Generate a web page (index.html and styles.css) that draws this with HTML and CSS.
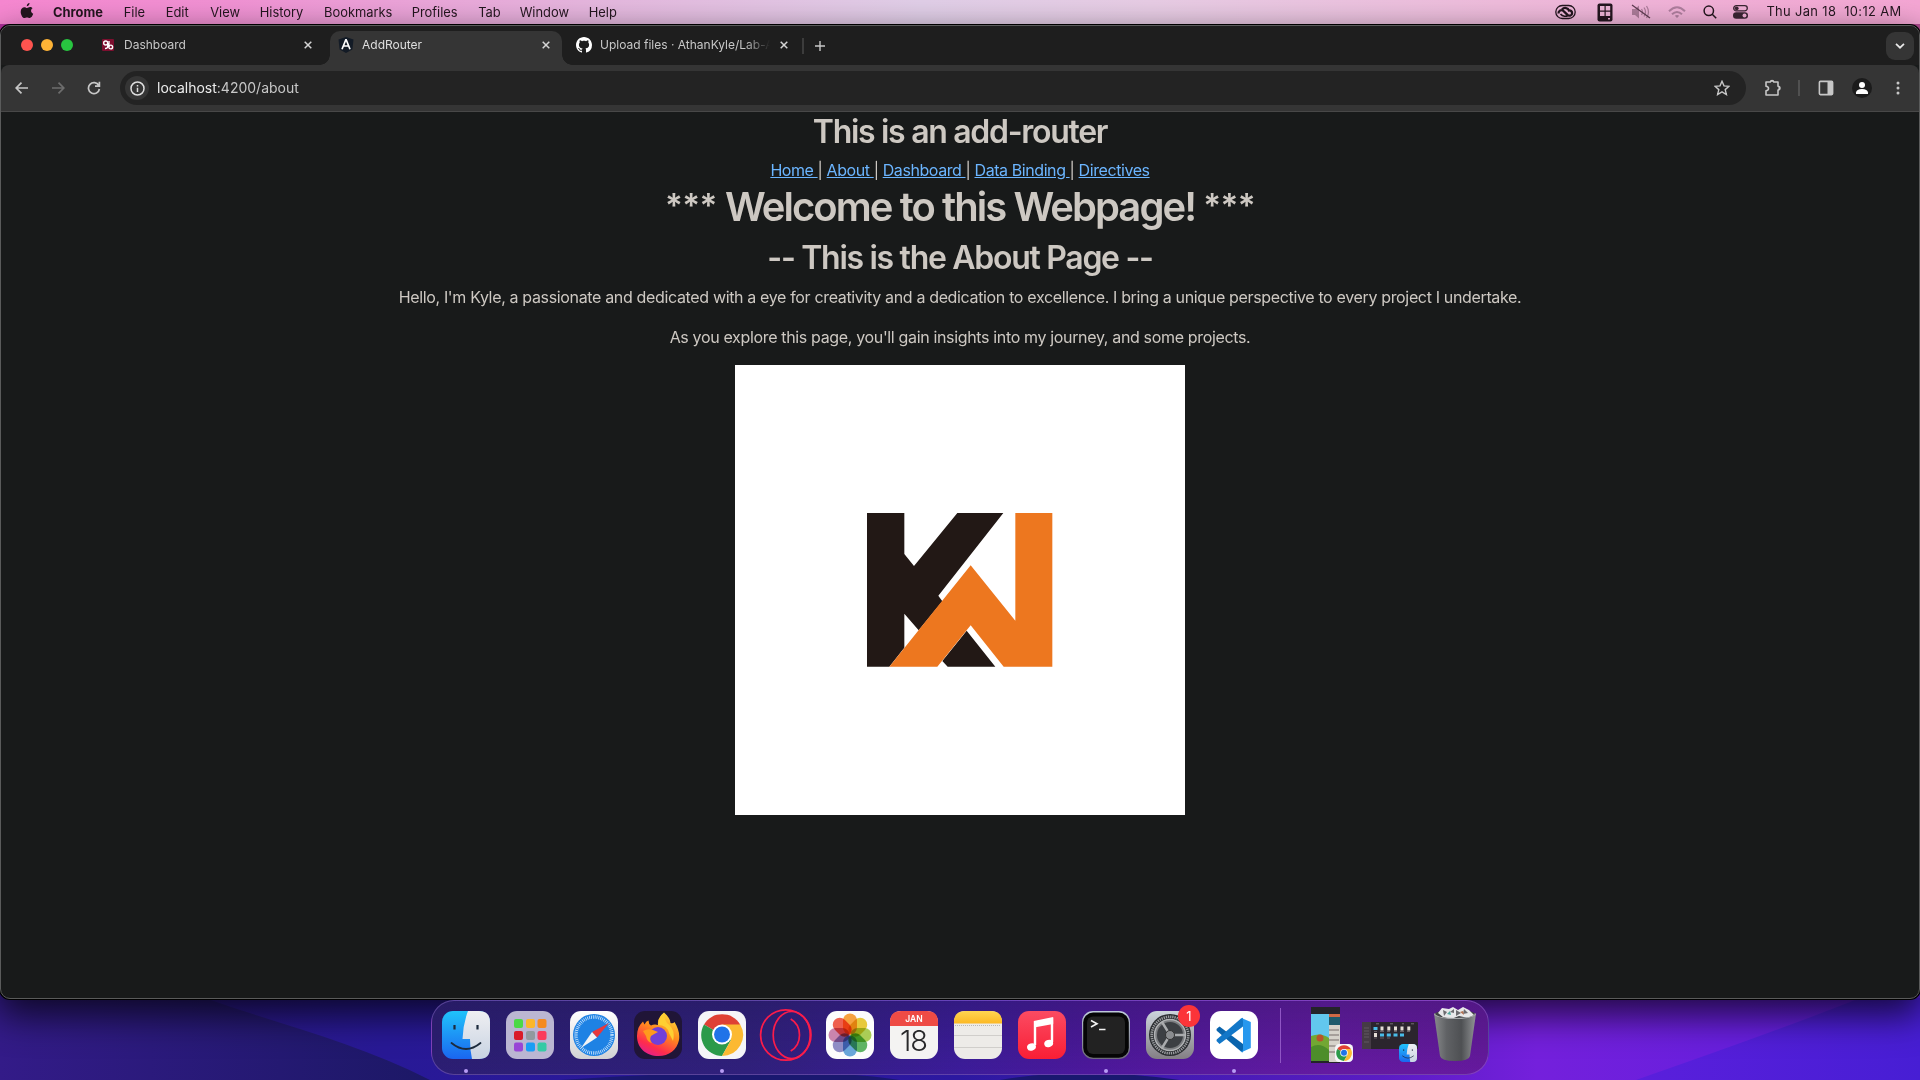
FILE: index.html
```html
<!DOCTYPE html>
<html lang="en">
<head>
<meta charset="utf-8">
<title>AddRouter</title>
<link rel="stylesheet" href="styles.css">
</head>
<body>
<svg class="wallpaper" viewBox="0 0 1920 1080" aria-hidden="true">
  <defs>
    <linearGradient id="wp" x1="0" x2="1"><stop offset="0" stop-color="#321a84"/><stop offset=".2" stop-color="#281996"/><stop offset=".5" stop-color="#2c18a0"/><stop offset=".72" stop-color="#5a1cc4"/><stop offset=".8" stop-color="#7420dc"/><stop offset="1" stop-color="#5c1ede"/></linearGradient>
    <linearGradient id="wl" x1="0" x2="1"><stop offset="0" stop-color="#331b88"/><stop offset="1" stop-color="#1c1866"/></linearGradient>
    <linearGradient id="wr" x1="0" x2="1"><stop offset="0" stop-color="#5a1fdc"/><stop offset="1" stop-color="#471ed4"/></linearGradient>
  </defs>
  <rect width="1920" height="1080" fill="url(#wp)"/>
  <rect width="30" height="60" fill="#b0309c"/><rect x="1890" width="30" height="60" fill="#b04a90"/>
  <path d="M0 980H160C240 1016 340 1034 430 1080H0Z" fill="url(#wl)"/>
  <path d="M1636 1080Q1780 1030 1860 998H1920V1080Z" fill="url(#wr)"/>
  <path d="M560 1080Q800 1064 900 1080ZM1000 1080Q1080 1066 1180 1080Z" fill="#1a1870"/>
</svg>
<header class="menubar">
  <svg class="apple" viewBox="0 0 14 17"><path d="M9.7 0C9.8 1.7 8.3 3.4 6.8 3.4 6.6 1.8 8.1.2 9.7 0ZM12.9 5.7C10.6 7.200 10.900 10.400 13.600 11.500 12.900 13.700 11.500 16 9.900 16 8.700 16 8.300 15.300 7 15.300S5.200 16 4.200 16C2.300 16 .3 12.600.3 9.300.3 6.100 2.200 4.400 4.300 4.400 5.500 4.400 6.400 5.200 7.100 5.200S8.800 4.300 10.200 4.300C11.300 4.300 12.300 4.800 12.900 5.700Z"/></svg>
  <nav class="menus"><b>Chrome</b><span>File</span><span>Edit</span><span>View</span><span>History</span><span>Bookmarks</span><span>Profiles</span><span>Tab</span><span>Window</span><span>Help</span></nav>
  <div class="status">
    <svg width="21" height="16" viewBox="0 0 21 16"><rect x=".8" y="1.500" width="19.400" height="13" rx="6.500" fill="none" stroke="#24161f" stroke-width="1.300"/><path d="M3.500 9.500a3 3 0 0 1 5-2.500l4 3.800c2 1.700 4.600.6 4.600-1.600 0-2-1.600-3-3.200-2.700-.8-2.600-4.600-3.700-6.900-1" fill="none" stroke="#24161f" stroke-width="2.300"/><path d="M5.500 10c2.200 3 5.800 2.500 7.500 1.500L9 7.500" fill="none" stroke="#24161f" stroke-width="1.600"/></svg>
    <svg width="16" height="19" viewBox="0 0 16 19"><rect x=".5" y=".5" width="15" height="18" rx="2" fill="#24161f"/><path d="M3 3h4.500v4.500H3zM8.700 3h4.500v4.500H8.700zM3 8.700h4.500v4.200H3zM8.700 8.700h4.500v4.200H8.700zM11 15h2v1.500h-2z" fill="#efb6d8"/></svg>
    <svg width="20" height="16" viewBox="0 0 20 16"><g opacity=".45"><path d="M1 5h3l4-3.500v13L4 11H1z" fill="#5d3a50"/><path d="M10.500 5q2 3 0 6M13 3.500q3 4.500 0 9M15.500 2q4 6 0 12" stroke="#5d3a50" fill="none" stroke-width="1.300"/></g><path d="M1 1l18 13" stroke="#5d3a50" stroke-width="1.200"/></svg>
    <svg width="18" height="13" viewBox="0 0 18 13" fill="none" stroke="#b07f9f" stroke-width="2"><path d="M1 5.200Q9-2.600 17 5.200M4 8.300Q9 3.600 14 8.300"/><path d="M9 12L6.800 9.800Q9 8 11.200 9.800Z" fill="#b07f9f" stroke="none"/></svg>
    <svg width="14" height="14" viewBox="0 0 14 14" fill="none" stroke="#24161f" stroke-width="1.500"><circle cx="5.800" cy="5.800" r="4.700"/><path d="M9.200 9.200l4 4"/></svg>
    <svg width="15" height="14" viewBox="0 0 15 14"><rect x=".7" y=".7" width="13.600" height="5.200" rx="2.600" fill="none" stroke="#3a2533" stroke-width="1.300"/><circle cx="3.700" cy="3.300" r="1.900" fill="#3a2533"/><rect y="7.300" width="15" height="6.500" rx="3.200" fill="#3a2533"/><circle cx="11.500" cy="10.500" r="2" fill="#f1b0d6"/></svg>
    <time><span>Thu Jan 18</span><span>10:12 AM</span></time>
  </div>
</header>

<main class="window">
  <div class="tabstrip">
    <div class="lights"><i class="red"></i><i class="amber"></i><i class="green"></i></div>
    <div class="tab tab-first">
      <svg width="12" height="12" viewBox="0 0 12 12"><rect width="12" height="12" rx="1" fill="#7d0f2f"/><circle cx="3.700" cy="4" r="2" fill="none" stroke="#fff" stroke-width="1.400"/><path d="M5.700 4v3.600Q5.500 9.600 3 9.500M7 2v6" fill="none" stroke="#fff" stroke-width="1.300"/><circle cx="8.700" cy="8" r="1.900" fill="none" stroke="#fff" stroke-width="1.400"/></svg>
      <span class="title">Dashboard</span><svg class="close" viewBox="0 0 8 8"><path d="M.7.7l6.600 6.600M7.300.7L.7 7.300"/></svg>
    </div>
    <div class="tab tab-active">
      <svg width="16" height="16" viewBox="0 0 16 16"><path d="M8 0l7.500 2.600-1.100 10L8 16l-6.400-3.400-1.100-10z" fill="#131b26"/><path d="M8 2.300L4 12.200M8 2.300l4 9.900M5.500 9h5" fill="none" stroke="#fff" stroke-width="1.700"/></svg>
      <span class="title">AddRouter</span><svg class="close" viewBox="0 0 8 8"><path d="M.7.7l6.600 6.600M7.300.7L.7 7.300"/></svg>
    </div>
    <div class="tab tab-last">
      <svg width="16" height="16" viewBox="0 0 16 16"><path fill="#fff" d="M8 0C3.580 0 0 3.580 0 8c0 3.540 2.290 6.530 5.470 7.590.4.070.55-.17.55-.38 0-.19-.01-.82-.01-1.490-2.010.37-2.530-.49-2.690-.94-.09-.23-.48-.94-.82-1.130-.28-.15-.68-.52-.01-.53.63-.01 1.080.58 1.230.82.720 1.210 1.870.87 2.330.66.070-.52.280-.87.510-1.070-1.780-.2-3.640-.89-3.640-3.950 0-.87.310-1.590.82-2.150-.08-.2-.36-1.020.08-2.120 0 0 .67-.21 2.200.82.640-.18 1.320-.27 2-.27s1.360.09 2 .27c1.530-1.040 2.200-.82 2.200-.82.440 1.100.16 1.920.08 2.120.51.560.82 1.270.82 2.150 0 3.070-1.870 3.750-3.650 3.950.29.25.54.73.54 1.480 0 1.070-.01 1.930-.01 2.200 0 .21.150.46.550.38A8.010 8.010 0 0 0 16 8c0-4.420-3.580-8-8-8z"/></svg>
      <span class="title">Upload files · AthanKyle/Lab-A</span><svg class="close" viewBox="0 0 8 8"><path d="M.7.7l6.600 6.600M7.300.7L.7 7.300"/></svg>
    </div>
    <i class="tab-sep"></i>
    <svg class="plus" width="10" height="10" viewBox="0 0 10 10"><path d="M5 0v10M0 5h10" stroke="#c7c7c7" stroke-width="1.400"/></svg>
    <div class="tab-search"><svg width="10" height="6" viewBox="0 0 10 6"><path d="M1 .8l4 3.900L9 .8" fill="none" stroke="#e8e8e8" stroke-width="1.700"/></svg></div>
  </div>
  <div class="toolbar">
    <div class="navbtns">
      <svg width="14" height="12" viewBox="0 0 14 12"><path d="M6.500.6L1.200 6l5.300 5.400M1.200 6H13" stroke="#c7c7c7"/></svg>
      <svg width="14" height="12" viewBox="0 0 14 12"><path d="M7.500.6L12.800 6l-5.300 5.400M12.800 6H1" stroke="#6d6d6d"/></svg>
      <svg width="14" height="14" viewBox="0 0 14 14"><path d="M11.800 4.500A5.500 5.500 0 1 0 12.400 8M12.400.8v4.400H8" stroke="#c7c7c7"/></svg>
    </div>
    <div class="omnibox">
      <div class="info"><svg width="15" height="15" viewBox="0 0 15 15"><circle cx="7.500" cy="7.500" r="6.500" fill="none" stroke="#dedede" stroke-width="1.500"/><path d="M7.500 6.700v4.200M7.500 3.900v1.500" stroke="#dedede" stroke-width="1.500"/></svg></div>
      <span class="url"><b>localhost</b>:4200/about</span>
      <svg class="star" width="16" height="16" viewBox="0 0 16 16"><path d="M8 1.300l2 4.600 5 .4-3.800 3.300 1.200 4.900L8 11.900l-4.400 2.600 1.200-4.900L1 6.300l5-.4z" fill="none" stroke="#c7c7c7" stroke-width="1.400"/></svg>
    </div>
    <div class="actions">
      <svg width="18" height="18" viewBox="0 0 18 18"><path d="M2 3h4.300a1.800 1.800 0 0 1 3.500 0H14v4.200a1.900 1.900 0 0 1 0 3.800v5H2v-4.300q2.500-.3 2.500-2.200T2 7.300Z" fill="none" stroke="#c7c7c7" stroke-width="1.600" stroke-linejoin="round"/><path d="M6.500 2.500a1.700 1.700 0 0 1 3.200 0ZM14.500 7.500a1.700 1.700 0 0 1 0 3.200Z" fill="#c7c7c7"/></svg>
      <i></i>
      <svg width="16" height="16" viewBox="0 0 16 16"><rect x="1.400" y="1.400" width="13.200" height="13.200" rx="1" fill="none" stroke="#c7c7c7" stroke-width="1.600"/><path d="M9.500 1.500h5v13h-5z" fill="#c7c7c7"/></svg>
      <svg width="20" height="20" viewBox="0 0 20 20"><circle cx="10" cy="10" r="10" fill="#1b1b1b"/><circle cx="10" cy="7" r="3" fill="#fff"/><path d="M4 16v-1.500Q4.500 11 10 11t6 3.500V16Z" fill="#fff"/></svg>
      <svg width="4" height="14" viewBox="0 0 4 14" fill="#c7c7c7"><circle cx="2" cy="2" r="1.500"/><circle cx="2" cy="7" r="1.500"/><circle cx="2" cy="12" r="1.500"/></svg>
    </div>
  </div>
  <section class="page">
    <h2 class="h-router">This is an add-router</h2>
    <nav class="links"><a>Home </a>| <a>About </a>| <a>Dashboard </a>| <a>Data Binding </a>| <a>Directives</a></nav>
    <h1><span class="stars">***</span> Welcome to this Webpage! <span class="stars">***</span></h1>
    <h2>-- This is the About Page --</h2>
    <p>Hello, I'm Kyle, a passionate and dedicated with a eye for creativity and a dedication to excellence. I bring a unique perspective to every project I undertake.</p>
    <p>As you explore this page, you'll gain insights into my journey, and some projects.</p>
    <svg class="logo" viewBox="0 0 450 450"><rect width="450" height="450" fill="#fff"/><g transform="translate(105 125) scale(.33333)"><path fill="#221815" d="M81 69H193V192L222 228 352 69H490L295 317 307 334 236 421 193 371V473L148 530H81ZM380 422L466 530H323L307 513Z"/><path fill="#ed771f" d="M148 530L392 226 526 392V69H637V530H491L392 406 292 530Z"/></g></svg>
  </section>
</main>

<footer class="dock">
  <svg class="app" viewBox="0 0 48 48"><defs><linearGradient id="fb" x2="0" y2="1"><stop stop-color="#20c3fb"/><stop offset="1" stop-color="#1a66f0"/></linearGradient><linearGradient id="fw" x2="0" y2="1"><stop stop-color="#efeff2"/><stop offset="1" stop-color="#c8d3e2"/></linearGradient>
    <symbol id="finder" viewBox="0 0 48 48"><rect width="48" height="48" rx="11" fill="url(#fb)"/><path d="M26 0H37Q48 0 48 11V37Q48 48 37 48H30Q28 39 28 28H20.500Q21 13 26 0Z" fill="url(#fw)"/><path d="M12.500 14v4.500M35.500 14v4.500" stroke="#1c2a3c" stroke-width="2.200"/><path d="M9.500 32Q24 44 38.500 32" fill="none" stroke="#1c2a3c" stroke-width="1.800" stroke-linecap="round"/></symbol></defs><use href="#finder" width="48" height="48"/><circle class="dot" cx="24" cy="60" r="2"/></svg>
  <svg class="app" viewBox="0 0 48 48"><rect width="48" height="48" rx="11" fill="#bbb6d2"/><rect x="8" y="8" width="9" height="9" rx="2" fill="#4bd948"/><rect x="20" y="8" width="9" height="9" rx="2" fill="#fbb62a"/><rect x="31.500" y="8" width="9" height="9" rx="2" fill="#f58a20"/><rect x="8" y="20" width="9" height="9" rx="2" fill="#d91b28"/><rect x="20" y="20" width="9" height="9" rx="2" fill="#929a9f"/><rect x="31.500" y="20" width="9" height="9" rx="2" fill="#fb3c5c"/><rect x="8" y="31.500" width="9" height="9" rx="2" fill="#9845d6"/><rect x="20" y="31.500" width="9" height="9" rx="2" fill="#1a9df5"/><rect x="31.500" y="31.500" width="9" height="9" rx="2" fill="#35caa5"/></svg>
  <svg class="app" viewBox="0 0 48 48"><defs><linearGradient id="sw" x2="0" y2="1"><stop stop-color="#fff"/><stop offset="1" stop-color="#d2d2d4"/></linearGradient></defs><rect width="48" height="48" rx="11" fill="url(#sw)"/><circle cx="24" cy="24" r="21" fill="#1e82e4"/><circle cx="24" cy="24" r="18" fill="none" stroke="#cfe7fc" stroke-width="3.400" stroke-dasharray=".8 1.090"/><path d="M39 12L22 21l5 5.500z" fill="#e8383c"/><path d="M11 37L22 21l5 5.500z" fill="#f2f2f4"/></svg>
  <svg class="app" viewBox="0 0 48 48"><defs><linearGradient id="ff" x1=".8" y1="0" x2=".3" y2="1"><stop stop-color="#ffe03c"/><stop offset=".45" stop-color="#ff8a1e"/><stop offset=".8" stop-color="#ff2c4c"/><stop offset="1" stop-color="#e3208c"/></linearGradient></defs><rect width="48" height="48" rx="11" fill="#201537"/><path d="M30 1.500C34 5 36 8 36.500 12Q39 13 40.500 11C44 17 46 22 45 29 43 39 35 45 24.500 45 12 45 3 37 3 25 3 19 5 14 9 10.500L10.500 13.500Q12 10 14.500 9.500 14.500 13 17 14.500 20 13 24 14 23 7 30 1.500Z" fill="url(#ff)"/><circle cx="24" cy="25" r="9" fill="#7140d8"/><path d="M9 20Q14 17 19 19L24 21Q20 23 17 25 15 29 18 32 13 31 12 25Z" fill="#ff9a1c"/><path d="M24 14Q33 14 35 22L39 30Q42 18 33 12 30 7 30 2 24 6 24 14Z" fill="#ffcf32"/></svg>
  <svg class="app" viewBox="0 0 48 48"><defs><symbol id="chrome" viewBox="0 0 48 48"><rect width="48" height="48" rx="11" fill="#f5f5f8"/><path d="M24 24L6 13.500A21 21 0 0 1 42.200 13.500Z" fill="#df4034"/><path d="M24 24L33 29 24 45A21 21 0 0 1 6 13.500Z" fill="#2b9a4a"/><path d="M24 13.500H42.200A21 21 0 0 1 24 45L33 29Z" fill="#fcb932"/><circle cx="24" cy="23.500" r="10" fill="#fff"/><circle cx="24" cy="23.500" r="8" fill="#2073e8"/></symbol></defs><use href="#chrome" width="48" height="48"/><circle class="dot" cx="24" cy="60" r="2"/></svg>
  <svg class="app" viewBox="0 0 48 48"><g fill="none" stroke="#fb1c4a" stroke-width="1.700"><circle cx="23.800" cy="24" r="25.200"/><ellipse cx="29.700" cy="24" rx="18.500" ry="23.500"/><path d="M28.700 8Q37.500 13 37.500 24T28.700 40"/></g></svg>
  <svg class="app" viewBox="0 0 48 48"><rect width="48" height="48" rx="11" fill="#fcfcfc"/><g transform="translate(24 24)"><g class="petals"><rect x="-7" y="-21.500" width="14" height="21" rx="7" fill="#f99a2a"/><rect x="-7" y="-21.500" width="14" height="21" rx="7" fill="#e8c727" transform="rotate(45)"/><rect x="-7" y="-21.500" width="14" height="21" rx="7" fill="#a3cb45" transform="rotate(90)"/><rect x="-7" y="-21.500" width="14" height="21" rx="7" fill="#4fae55" transform="rotate(135)"/><rect x="-7" y="-21.500" width="14" height="21" rx="7" fill="#5a9fd8" transform="rotate(180)"/><rect x="-7" y="-21.500" width="14" height="21" rx="7" fill="#8583c2" transform="rotate(225)"/><rect x="-7" y="-21.500" width="14" height="21" rx="7" fill="#c87aa6" transform="rotate(270)"/><rect x="-7" y="-21.500" width="14" height="21" rx="7" fill="#f0503c" transform="rotate(315)"/></g></g></svg>
  <svg class="app" viewBox="0 0 48 48"><rect width="48" height="48" rx="11" fill="#f4f3f2"/><path d="M0 15V11Q0 0 11 0H37Q48 0 48 11V15Z" fill="#ee4b45"/><text x="24" y="11" class="cal-m">JAN</text><text x="23.500" y="40" class="cal-d">18</text></svg>
  <svg class="app" viewBox="0 0 48 48"><defs><linearGradient id="ny" x2="0" y2="1"><stop stop-color="#ffd552"/><stop offset="1" stop-color="#fcb823"/></linearGradient></defs><rect width="48" height="48" rx="11" fill="#edebe8"/><path d="M0 12.500V11Q0 0 11 0H37Q48 0 48 11V12.500Z" fill="url(#ny)"/><path d="M0 24.500H48M0 36.500H48" stroke="#d0cecb"/><path d="M1 14.500H47" stroke="#b9b7b4" stroke-dasharray="1 1"/></svg>
  <svg class="app" viewBox="0 0 48 48"><defs><linearGradient id="mu" x2="0" y2="1"><stop stop-color="#fb4b62"/><stop offset="1" stop-color="#f91e35"/></linearGradient></defs><rect width="48" height="48" rx="11" fill="url(#mu)"/><path d="M17 34V11L34 7.500V31" fill="none" stroke="#fff" stroke-width="2.400"/><path d="M16 10.500L35.200 7v6L16 16.500Z" fill="#fff"/><ellipse cx="13.500" cy="36" rx="4.500" ry="3.600" fill="#fff" transform="rotate(-18 13.500 36)"/><ellipse cx="30.700" cy="32.500" rx="4.500" ry="3.600" fill="#fff" transform="rotate(-18 30.700 32.500)"/></svg>
  <svg class="app" viewBox="0 0 48 48"><defs><linearGradient id="te" x2="0" y2="1"><stop stop-color="#bfcbdb"/><stop offset="1" stop-color="#6d6b78"/></linearGradient></defs><rect width="48" height="48" rx="11" fill="url(#te)"/><rect x="1.200" y="1.500" width="45.600" height="45.300" rx="10" fill="#050505"/><rect x="5" y="5.500" width="38" height="37.500" rx="6" fill="#222"/><path d="M9 9.500l6 3.200-6 3.300M17 18.500h6.500" fill="none" stroke="#f2f2f2" stroke-width="1.600"/><circle class="dot" cx="24" cy="60" r="2"/></svg>
  <div class="settings"><svg class="app" viewBox="0 0 48 48"><defs><linearGradient id="se" x2="0" y2="1"><stop stop-color="#cdd5dc"/><stop offset="1" stop-color="#837f84"/></linearGradient></defs><rect width="48" height="48" rx="11" fill="url(#se)"/><circle cx="24" cy="24" r="21" fill="#2b2e31"/><circle cx="24" cy="24" r="18.300" fill="none" stroke="#9b9da0" stroke-width="2.600" stroke-dasharray="1.300 .9"/><circle cx="24" cy="24" r="15.500" fill="#7b7d80"/><circle cx="24" cy="24" r="13" fill="#3c3f43"/><path d="M24 24H39M24 24L16 11M24 24L16 37" stroke="#a9abad" stroke-width="2.400"/><circle cx="24" cy="24" r="4.500" fill="#8a8c8f" stroke="#333"/><circle cx="24" cy="24" r="15.500" fill="none" stroke="#b1b3b5" stroke-width="1.500"/></svg><span class="badge">1</span></div>
  <svg class="app" viewBox="0 0 48 48"><rect width="48" height="48" rx="11" fill="#fff"/><path d="M6.500 18L9.500 15.500 33 33V41.500L31 40.500 6.700 19.800Z" fill="#0a64ad"/><path d="M6.500 30L9.500 33 33 15.500V6.800L31 7.500 6.700 28.400Z" fill="#1277c8"/><path d="M31.500 7L40.800 11V37L31.500 41.200 30.500 40.500Q33 41 33 38V10Q33 7 30.500 7.600Z" fill="#2798ee"/><circle class="dot" cx="24" cy="60" r="2"/></svg>
  <i class="dock-sep"></i>
  <svg class="thumb-a" width="42" height="56" viewBox="0 0 42 56"><rect width="29" height="56" fill="#242329"/><rect y="7" width="18" height="47" fill="#62c7ee"/><path d="M0 29Q10 25 18 31V54H0Z" fill="#72a733"/><path d="M0 40Q9 35 18 43V54H0Z" fill="#4d8d2a"/><circle cx="9" cy="31" r="3.500" fill="#b8532a"/><rect x="18" y="7" width="11" height="3" fill="#cf6945"/><rect x="18" y="10" width="11" height="8" fill="#1e5a6c"/><rect x="18" y="18" width="11" height="37" fill="#d6d2ca"/><path d="M18 23h10M18 28h10M18 33h10M18 39h10M18 45h10" stroke="#776d6a"/><use href="#chrome" x="24" y="37" width="18" height="18"/></svg>
  <svg class="thumb-b" width="56" height="41" viewBox="0 0 56 41"><rect width="56" height="27" rx="1" fill="#2b252d"/><rect width="9" height="27" fill="#453b45"/><path d="M2 6h5M2 9h5M2 12h5M2 15h5M2 20h5" stroke="#6a606a" stroke-width=".8"/><path d="M14 1.800h3M28 1.800h3M40 1.800h2M49 1.800h3" stroke="#756d76"/><path d="M11.500 5h4v3h-4zM18 11.500h4v3h-4zM24.800 11.500h4v3h-4zM31.500 11.500h4v3h-4zM38 11.500h4v3h-4z" fill="#48bce9"/><path d="M18.500 4.500h3v4h-3zM25.300 4.500h3v4h-3zM32 4.500h3v4h-3zM38.500 4.500h3v4h-3zM45.300 4.500h3v4h-3zM12 11h3v4h-3z" fill="#e4ddd5"/><path d="M12 9.500h3M18 9.500h4M25 9.500h3M32 9.500h3M38 9.500h4M45 9.500h3M12 16h3M18 16h4M25 16h3" stroke="#827a80" stroke-width=".7"/><use href="#finder" x="37" y="22" width="18" height="18"/></svg>
  <svg class="trash" width="44" height="56" viewBox="0 0 44 56"><defs><linearGradient id="tr" x2="1" y2="0"><stop stop-color="#888a8c"/><stop offset=".3" stop-color="#606265"/><stop offset=".65" stop-color="#4e5053"/><stop offset="1" stop-color="#929496"/></linearGradient></defs><path d="M1 7.500Q22 2 43 7.500L37 50Q36 55 22 55T7 50Z" fill="url(#tr)"/><ellipse cx="22" cy="8.500" rx="20" ry="4.800" fill="#404246"/><path d="M5 7l4-5 7 1 4-2 5 3 5-3 6 3 5 5-6 3-9-2-8 3-8-2z" fill="#e8e8ea"/><path d="M10 4l4 2-3 4zM23 4l5 3-5 3zM31 3l4 4-5 1zM17 6l4-3v4z" fill="#6d6c70"/><path d="M14 8l3-3 1 4z" fill="#50a89e"/><path d="M27 6l3-1 1 4z" fill="#b47252"/><path d="M1.500 8Q4 12.500 22 12.500T42.500 8" fill="none" stroke="#a4a6a8" stroke-width="1.200"/></svg>
</footer>
</body>
</html>
```
FILE: styles.css
```css
* { box-sizing: border-box; }
html, body { height: 100%; }
body { margin: 0; overflow: hidden; display: flex; flex-direction: column; font-family: Inter, "Noto Sans", sans-serif; background: #281996; }
svg { display: block; flex: none; }
.wallpaper { position: absolute; inset: 0; width: 1920px; height: 1080px; z-index: -1; }

.menubar { height: 24px; flex: none; display: flex; align-items: center; padding: 0 18.5px 0 20px; color: #24161f; font-size: 12.9px; background: linear-gradient(90deg, #f788d1 0, #f192d4 12%, #e5b9df 32%, #e1cfe8 48%, #e8cde5 60%, #efbcdc 78%, #f5a6d4 100%); }
.apple { width: 14px; height: 16px; fill: #24161f; margin: 0 19px 2px 0; }
.menus { display: grid; grid-template-columns: 70.7px 42px 44.5px 49.5px 64.3px 87.7px 66.5px 41.5px 69px 60px; line-height: 23px; white-space: nowrap; }
.menus b { font-weight: 700; }
.status { margin-left: auto; display: flex; align-items: center; }
.status svg:nth-child(1) { margin-right: 21px; }
.status svg:nth-child(2) { margin-right: 18px; }
.status svg:nth-child(3) { margin-right: 17px; }
.status svg:nth-child(4) { margin-right: 17px; }
.status svg:nth-child(5) { margin-right: 16px; }
.status svg:nth-child(6) { margin-right: 18px; }
time { display: flex; gap: 8px; letter-spacing: .36px; padding-bottom: 1px; white-space: nowrap; }

.window { margin-top: 1px; height: 974px; flex: none; border: 1px solid #5a5b5b; border-radius: 10px; overflow: hidden; display: flex; flex-direction: column; background: #181a1a; box-shadow: 0 0 0 1px #000, 0 14px 36px 2px rgba(0, 0, 0, .7); }
.tabstrip { height: 39px; flex: none; display: flex; align-items: center; background: #1e1e1e; color: #c7c7c7; font-size: 12px; }
.lights { display: flex; gap: 8px; padding: 0 0 1px 20px; width: 101px; }
.lights i { width: 12px; height: 12px; border-radius: 50%; }
.red { background: #fe544f; }
.amber { background: #feb336; }
.green { background: #28c540; }
.tab { display: flex; align-items: center; white-space: nowrap; padding-bottom: 2px; }
.tab-first { width: 228px; padding-right: 18.5px; }
.tab-first .title { margin-left: 10px; }
.close { width: 8px; height: 8px; margin-left: auto; stroke: #d5d5d5; stroke-width: 1.5; }
.tab-active { width: 232px; height: 34px; align-self: flex-end; padding: 0 12px 7px 8px; background: #353535; border-radius: 10px 10px 0 0; color: #dedede; position: relative; }
.tab-active::before, .tab-active::after { content: ""; position: absolute; bottom: 0; width: 10px; height: 10px; }
.tab-active::before { left: -10px; background: radial-gradient(circle at 0 0, transparent 9.5px, #353535 10px); }
.tab-active::after { right: -10px; background: radial-gradient(circle at 100% 0, transparent 9.5px, #353535 10px); }
.tab-active .title { margin-left: 8px; }
.tab-last { width: 226px; padding-left: 14px; }
.tab-last .title { margin-left: 8px; width: 176px; -webkit-mask-image: linear-gradient(90deg, #000 145px, transparent 170px); mask-image: linear-gradient(90deg, #000 145px, transparent 170px); }
.tab-sep { width: 2px; height: 16px; margin: 0 11px 0 14px; background: #3c3c3c; }
.tab-search { margin-left: auto; margin-right: 5px; width: 28px; height: 28px; border-radius: 9px; background: #353535; display: grid; place-items: center; }

.toolbar { height: 47px; flex: none; display: flex; align-items: center; background: #353535; border-bottom: 1px solid #484848; border-radius: 8px 8px 0 0; }
.navbtns { width: 119px; display: flex; gap: 22px; align-items: center; padding-left: 14px; stroke-width: 1.7; }
.navbtns svg { fill: none; }
.omnibox { width: 1626px; height: 34px; border-radius: 17px; background: #232323; display: flex; align-items: center; padding: 0 16px 0 5px; }
.info { width: 24px; height: 24px; border-radius: 50%; background: #353535; display: grid; place-items: center; margin-right: 8px; }
.url { font-size: 14px; color: #c7c7c7; padding-bottom: 1px; }
.url b { font-weight: 400; color: #ececec; }
.star { margin-left: auto; }
.actions { flex: 1; display: flex; align-items: center; padding-left: 18px; }
.actions i { width: 2px; height: 16px; background: #515151; margin: 0 18px 0 16px; }
.actions svg:nth-child(4) { margin: 0 24px 0 18px; }

.page { flex: 1; display: flex; flex-direction: column; align-items: center; color: #cdc8c2; white-space: nowrap; font-size: 16px; line-height: 24px; letter-spacing: -.345px; }
h1, h2, p { margin: 0; }
h1, h2 { font-weight: 560; line-height: 1.2; padding-top: 1px; margin-bottom: 7px; }
h2 { font-size: 32px; letter-spacing: -1.3px; }
h1 { font-size: 40px; letter-spacing: -1.95px; height: 49px; }
.stars { font-size: 33px; line-height: 0; letter-spacing: -.5px; vertical-align: 4px; }
.links { letter-spacing: -.42px; }
.links a { color: #6bb5ff; text-decoration: underline; white-space: pre; }
p { margin-bottom: 16px; }
.logo { width: 450px; height: 450px; }

.dock { margin: 1px auto 0; width: 1058px; height: 75px; flex: none; display: flex; align-items: center; gap: 16px; padding: 0 10px 5px; border: 1px solid rgba(190, 150, 255, .32); border-radius: 23px; background: linear-gradient(180deg, rgba(25, 20, 60, .25), transparent), linear-gradient(90deg, #2c1e74 0, #30207c 30%, #3c1c9a 50%, #4c189c 62%, #641aa2 85%, #66199e 100%); }
.app { width: 48px; height: 48px; overflow: visible; }
.dot { fill: #b79cf5; }
.cal-m { font: 600 8.5px Inter, sans-serif; fill: #fff; text-anchor: middle; }
.cal-d { font: 300 29px Inter, sans-serif; fill: #29292b; text-anchor: middle; letter-spacing: -1px; }
.petals rect { mix-blend-mode: multiply; opacity: .9; }
.settings { position: relative; }
.badge { position: absolute; right: -6px; top: -6px; width: 22px; height: 22px; border-radius: 50%; background: #fb3439; color: #fff; font-size: 13px; line-height: 22px; text-align: center; }
.dock-sep { width: 1px; height: 55px; flex: none; margin-left: 6px; background: #8f55c4; }
.thumb-a { margin-left: 14px; }
.thumb-b { margin: 14px 0 0 -7px; }
.trash { margin: 0 0 2px -1px; }
```
